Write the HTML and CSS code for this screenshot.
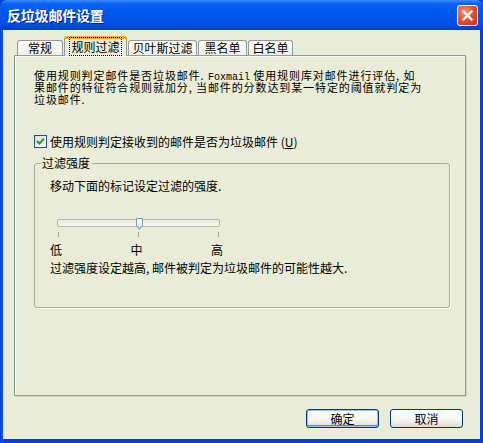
FILE: index.html
```html
<!DOCTYPE html>
<html lang="zh-CN">
<head>
    <meta charset="UTF-8">
    <title>反垃圾邮件设置</title>
    <link rel="stylesheet" href="styles.css">
</head>
<body>
    <div class="window">
        <div class="titlebar">
            <span class="title">反垃圾邮件设置</span>
            <span class="close">
                <svg width="11" height="11" viewBox="0 0 11 11">
                    <path d="M1.5 1.5 L9.5 9.5 M9.5 1.5 L1.5 9.5" stroke="#fff" stroke-width="2.2" stroke-linecap="square"/>
                </svg>
            </span>
        </div>
        <div class="client">
            <div class="tabs">
                <div class="tab t1">常规</div>
                <div class="tab t2 active"><span class="focus">规则过滤</span></div>
                <div class="tab t3">贝叶斯过滤</div>
                <div class="tab t4">黑名单</div>
                <div class="tab t5">白名单</div>
            </div>
            <div class="pane">
                <p class="intro">使用规则判定邮件是否垃圾邮件. <span class="latin">Foxmail</span> 使用规则库对邮件进行评估, 如<br>果邮件的特征符合规则就加分, 当邮件的分数达到某一特定的阈值就判定为<br>垃圾邮件.</p>

                <label class="check">
                    <span class="box">
                        <svg width="9" height="9" viewBox="0 0 9 9">
                            <path d="M1 4 L3.5 6.5 L8 1.5" fill="none" stroke="#21a121" stroke-width="2"/>
                        </svg>
                    </span>
                    <span>使用规则判定接收到的邮件是否为垃圾邮件 (<u>U</u>)</span>
                </label>

                <fieldset class="group">
                    <legend>过滤强度</legend>
                    <p class="hint">移动下面的标记设定过滤的强度.</p>
                    <div class="slider">
                        <div class="track"></div>
                        <svg class="thumb" width="7" height="12" viewBox="0 0 7 12">
                            <path d="M0.5 0.5 H6.5 V8 L3.5 11.5 L0.5 8 Z" fill="#f4f6ee" stroke="#7f9db9"/>
                            <path d="M1.5 8 L3.5 10.3 L5.5 8" fill="none" stroke="#6ec46e"/>
                        </svg>
                    </div>
                    <div class="ticks">
                        <span></span><span></span><span></span>
                    </div>
                    <div class="levels">
                        <span>低</span><span>中</span><span>高</span>
                    </div>
                    <p class="hint">过滤强度设定越高, 邮件被判定为垃圾邮件的可能性越大.</p>
                </fieldset>
            </div>
            <div class="buttons">
                <button class="btn default">确定</button>
                <button class="btn">取消</button>
            </div>
        </div>
    </div>
</body>
</html>
```

FILE: styles.css
```css
* {
    margin: 0;
    padding: 0;
    box-sizing: border-box;
}
body {
    background: #0a3fd6;
    font-family: "Noto Sans CJK SC", "Liberation Sans", sans-serif;
    font-size: 12px;
    color: #000;
}
.window {
    width: 483px;
    height: 443px;
    display: flex;
    flex-direction: column;
    background: linear-gradient(to right, #0831d9, #1658f0 2px, #0a3fd6 4px);
    border-radius: 7px 7px 0 0;
    padding: 0 3px 4px 3px;
}
.titlebar {
    height: 30px;
    margin: 0 -3px;
    padding: 0 5px 0 7px;
    display: flex;
    align-items: center;
    justify-content: space-between;
    border-radius: 7px 7px 0 0;
    background: linear-gradient(to bottom, #3d8dff 0%, #0a62f4 12%, #0058ee 40%, #0054e6 75%, #0048d8 92%, #003cc4 100%);
}
.title {
    color: #fff;
    font-size: 14px;
    font-weight: bold;
    text-shadow: 1px 1px 0 #0a1f80;
    letter-spacing: -0.2px;
}
.close {
    width: 21px;
    height: 21px;
    margin-top: 1px;
    display: flex;
    align-items: center;
    justify-content: center;
    border: 1px solid #fff;
    border-radius: 3px;
    background: radial-gradient(circle at 35% 30%, #f0937a, #e04a2a 55%, #c4301a);
}
.client {
    flex: 1;
    display: flex;
    flex-direction: column;
    background: #e9ecd6;
    padding: 6px 14px 0 11px;
}
.tabs {
    display: flex;
    align-items: flex-end;
    height: 19px;
    padding-left: 3px;
    position: relative;
    z-index: 1;
}
.tab {
    height: 15px;
    line-height: 14px;
    text-align: center;
    border: 1px solid #919b9c;
    border-bottom: none;
    border-radius: 3px 3px 0 0;
    background: linear-gradient(to bottom, #fdfdfb, #f0f0e8);
    margin-right: 1px;
}
.t1 { width: 46px; }
.t2 { width: 63px; }
.t3 { width: 69px; }
.t4 { width: 49px; }
.t5 { width: 45px; }
.tab.active {
    height: 20px;
    margin-bottom: -1px;
    border-top: 3px solid #f1a03a;
    background: #e9ecd6;
    padding-top: 1px;
    line-height: 14px;
}
.focus {
    outline: 1px dotted #000;
    outline-offset: 0;
    padding: 0 1px;
}
.pane {
    height: 341px;
    border: 1px solid #919b9c;
    box-shadow: inset 1px 1px 0 #f8f8f0, 1px 1px 0 #d6d8c4;
    padding: 13px 19px 0 19px;
}
.intro {
    font-size: 11px;
    letter-spacing: 0.9px;
    line-height: 12px;
    white-space: nowrap;
}
.latin {
    font-family: "Liberation Mono", monospace;
    font-size: 10px;
    letter-spacing: 0;
    line-height: 0;
}
.check {
    display: flex;
    align-items: center;
    gap: 3px;
    margin-top: 29px;
    height: 14px;
}
.box {
    width: 13px;
    height: 13px;
    display: flex;
    align-items: center;
    justify-content: center;
    border: 1px solid #1c5180;
    background: linear-gradient(135deg, #dcdcd7, #ffffff);
}
.group {
    margin-top: 9px;
    width: 416px;
    height: 151px;
    border: 1px solid #a7ab9c;
    border-radius: 3px;
    box-shadow: 1px 1px 0 #fbfbf4;
    padding: 10px 15px 0 15px;
}
.group legend {
    margin-left: -9px;
    padding: 0 2px 0 1px;
    line-height: 12px;
    color: #000;
}
.hint {
    line-height: 14px;
}
.slider {
    position: relative;
    margin: 26px 0 0 7px;
    width: 163px;
    height: 11px;
}
.track {
    margin-top: 1px;
    height: 8px;
    border: 1px solid #b7b9a8;
    border-radius: 2px;
    background: linear-gradient(to bottom, #e8e9df, #f7f7f2);
}
.thumb {
    position: absolute;
    left: 79px;
    top: -1px;
}
.ticks {
    display: flex;
    justify-content: space-between;
    width: 161px;
    margin: 2px 0 0 8px;
    height: 5px;
}
.ticks span {
    width: 1px;
    height: 5px;
    background: #a0a494;
}
.levels {
    display: flex;
    justify-content: space-between;
    width: 173px;
    margin-top: 7px;
    line-height: 12px;
}
.levels span {
    width: 12px;
    text-align: center;
}
.levels + .hint {
    margin-top: 5px;
}
.buttons {
    display: flex;
    justify-content: flex-end;
    gap: 11px;
    padding: 13px 3px 0 0;
}
.btn {
    width: 73px;
    height: 19px;
    font-family: "Noto Sans CJK SC", sans-serif;
    font-size: 12px;
    line-height: 15px;
    border: 1px solid #003c74;
    border-radius: 3px;
    background: linear-gradient(to bottom, #ffffff, #f4f4f0 60%, #dedbce);
    color: #000;
}
.btn.default {
    box-shadow: inset 0 0 0 1px #9dbcf5, inset 0 -1px 0 1px #5c87e0;
}
```
